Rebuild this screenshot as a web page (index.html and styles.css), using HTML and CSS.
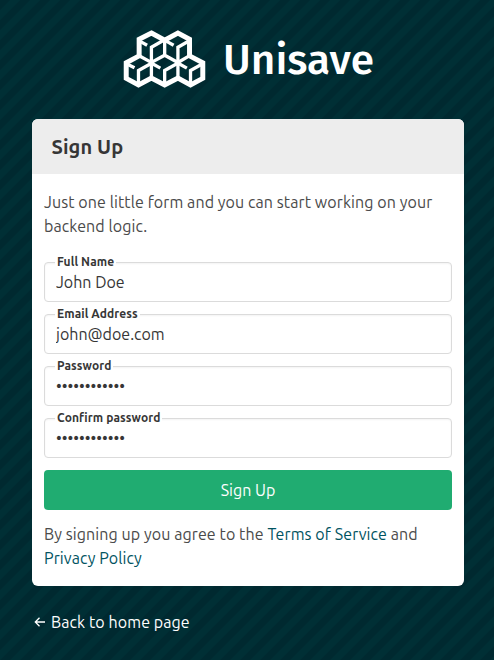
FILE: index.html
```html
<!DOCTYPE html>
<html lang="en">
<head>
<meta charset="utf-8">
<title>Unisave – Sign Up</title>
<link rel="stylesheet" href="styles.css">
</head>
<body>
<main class="page">
  <header class="brand">
    <svg class="brand-mark" viewBox="41 29 247 175" aria-hidden="true">
      <g fill="none" stroke="#fff" stroke-width="10">
        <path stroke-width="15" d="M125 38L165 60L205 38L240 57V107L280 128V175L243 195L205 174L165 195L125 174L86 195L49 175V128L88 107V57Z"/>
        <path d="M165 57V105M85 105L125 127L165 105L205 127L243 105M125 127V178M205 127V178"/>
        <path d="M125 123V81L162 60M87 61L112 75M205 123V81L242 60M167 61L192 75M86 195V151L124 130M48 130L74 143M165 195V151L203 130M127 130L152 144M243 195V151L281 130M207 130L232 144"/>
      </g>
    </svg>
    <svg class="brand-name" width="152" height="58" viewBox="0 0 152 58"><text x="0" y="44" textLength="151" lengthAdjust="spacingAndGlyphs">Unisave</text></svg>
  </header>
  <section class="card">
    <h1 class="card-title"><span>Sign Up</span></h1>
    <form class="card-body">
      <p class="intro">Just one little form and you can start working on your<br>backend logic.</p>
      <div class="field"><label for="name">Full Name</label><input id="name" type="text" value="John Doe"></div>
      <div class="field"><label for="email">Email Address</label><input id="email" type="text" value="john@doe.com"></div>
      <div class="field"><label for="password">Password</label><input id="password" type="password" value="abcdefghijkl"></div>
      <div class="field"><label for="confirm">Confirm password</label><input id="confirm" type="password" value="abcdefghijkl"></div>
      <button class="submit" type="button">Sign Up</button>
      <p class="terms">By signing up you agree to the <a href="#">Terms of Service</a> and<br><a href="#">Privacy Policy</a></p>
    </form>
  </section>
  <a class="back" href="#"><svg width="12" height="12" viewBox="0 0 12 12" aria-hidden="true"><path d="M11 6H1.5M5.5 1.8L1.3 6L5.5 10.2" fill="none" stroke="#fff" stroke-width="1.3"/></svg><span>Back to home page</span></a>
</main>
</body>
</html>
```

FILE: styles.css
```css
* { box-sizing: border-box; }
body {
  margin: 0;
  height: 660px;
  overflow: hidden;
  font: 16px/24px Ubuntu, "Noto Sans", sans-serif;
  letter-spacing: 0.09px;
  color: #4a4a4a;
  background: #002930 linear-gradient(135deg, #002930 24%, #002f35 27%, #002f35 49%, #002930 52%, #002930 74%, #002f35 77%) 0 0 / 20px 20px;
}
.page { padding: 30px 30px 0 32px; }
.brand { display: flex; height: 58px; padding-left: 91px; }
.brand-mark { width: 83px; height: 58px; margin-right: 17px; }
.brand-name { overflow: visible; letter-spacing: 0; }
.brand-name text { font: 500 42px "Fira Sans", "Noto Sans", sans-serif; fill: #fff; }
.card { width: 432px; height: 467px; margin-top: 31px; background: #fff; border-radius: 6px; overflow: hidden; }
.card-title { margin: 0; height: 55px; padding: 0 19.5px; background: #ededed; color: #363636; font-size: 20px; line-height: 56px; font-weight: 700; }
.card-body { padding: 16px 12px 0; }
p { margin: 0; white-space: nowrap; }
.intro { margin-bottom: 24px; }
.field { position: relative; height: 40px; margin-bottom: 12px; }
.field label { position: absolute; top: -8px; left: 11px; padding: 0 2px; background: #fff; color: #363636; font-size: 12px; font-weight: 700; line-height: 16px; }
.field input { display: block; width: 100%; height: 40px; padding: 0 11px; border: 1px solid #dbdbdb; border-radius: 4px; background: #fff; box-shadow: inset 0 1px 2px rgba(10, 10, 10, .05); color: #363636; font: inherit; outline: none; }
.submit { display: block; width: 100%; height: 40px; margin: 0 0 12px; padding: 0; border: 0; border-radius: 4px; background: #20ac71; color: #fff; font: inherit; }
.terms a { color: #00535f; text-decoration: none; }
.back { display: flex; align-items: center; width: 160px; height: 24px; margin-top: 24px; padding-left: 2px; gap: 5px; color: #fff; text-decoration: none; white-space: nowrap; }
```
